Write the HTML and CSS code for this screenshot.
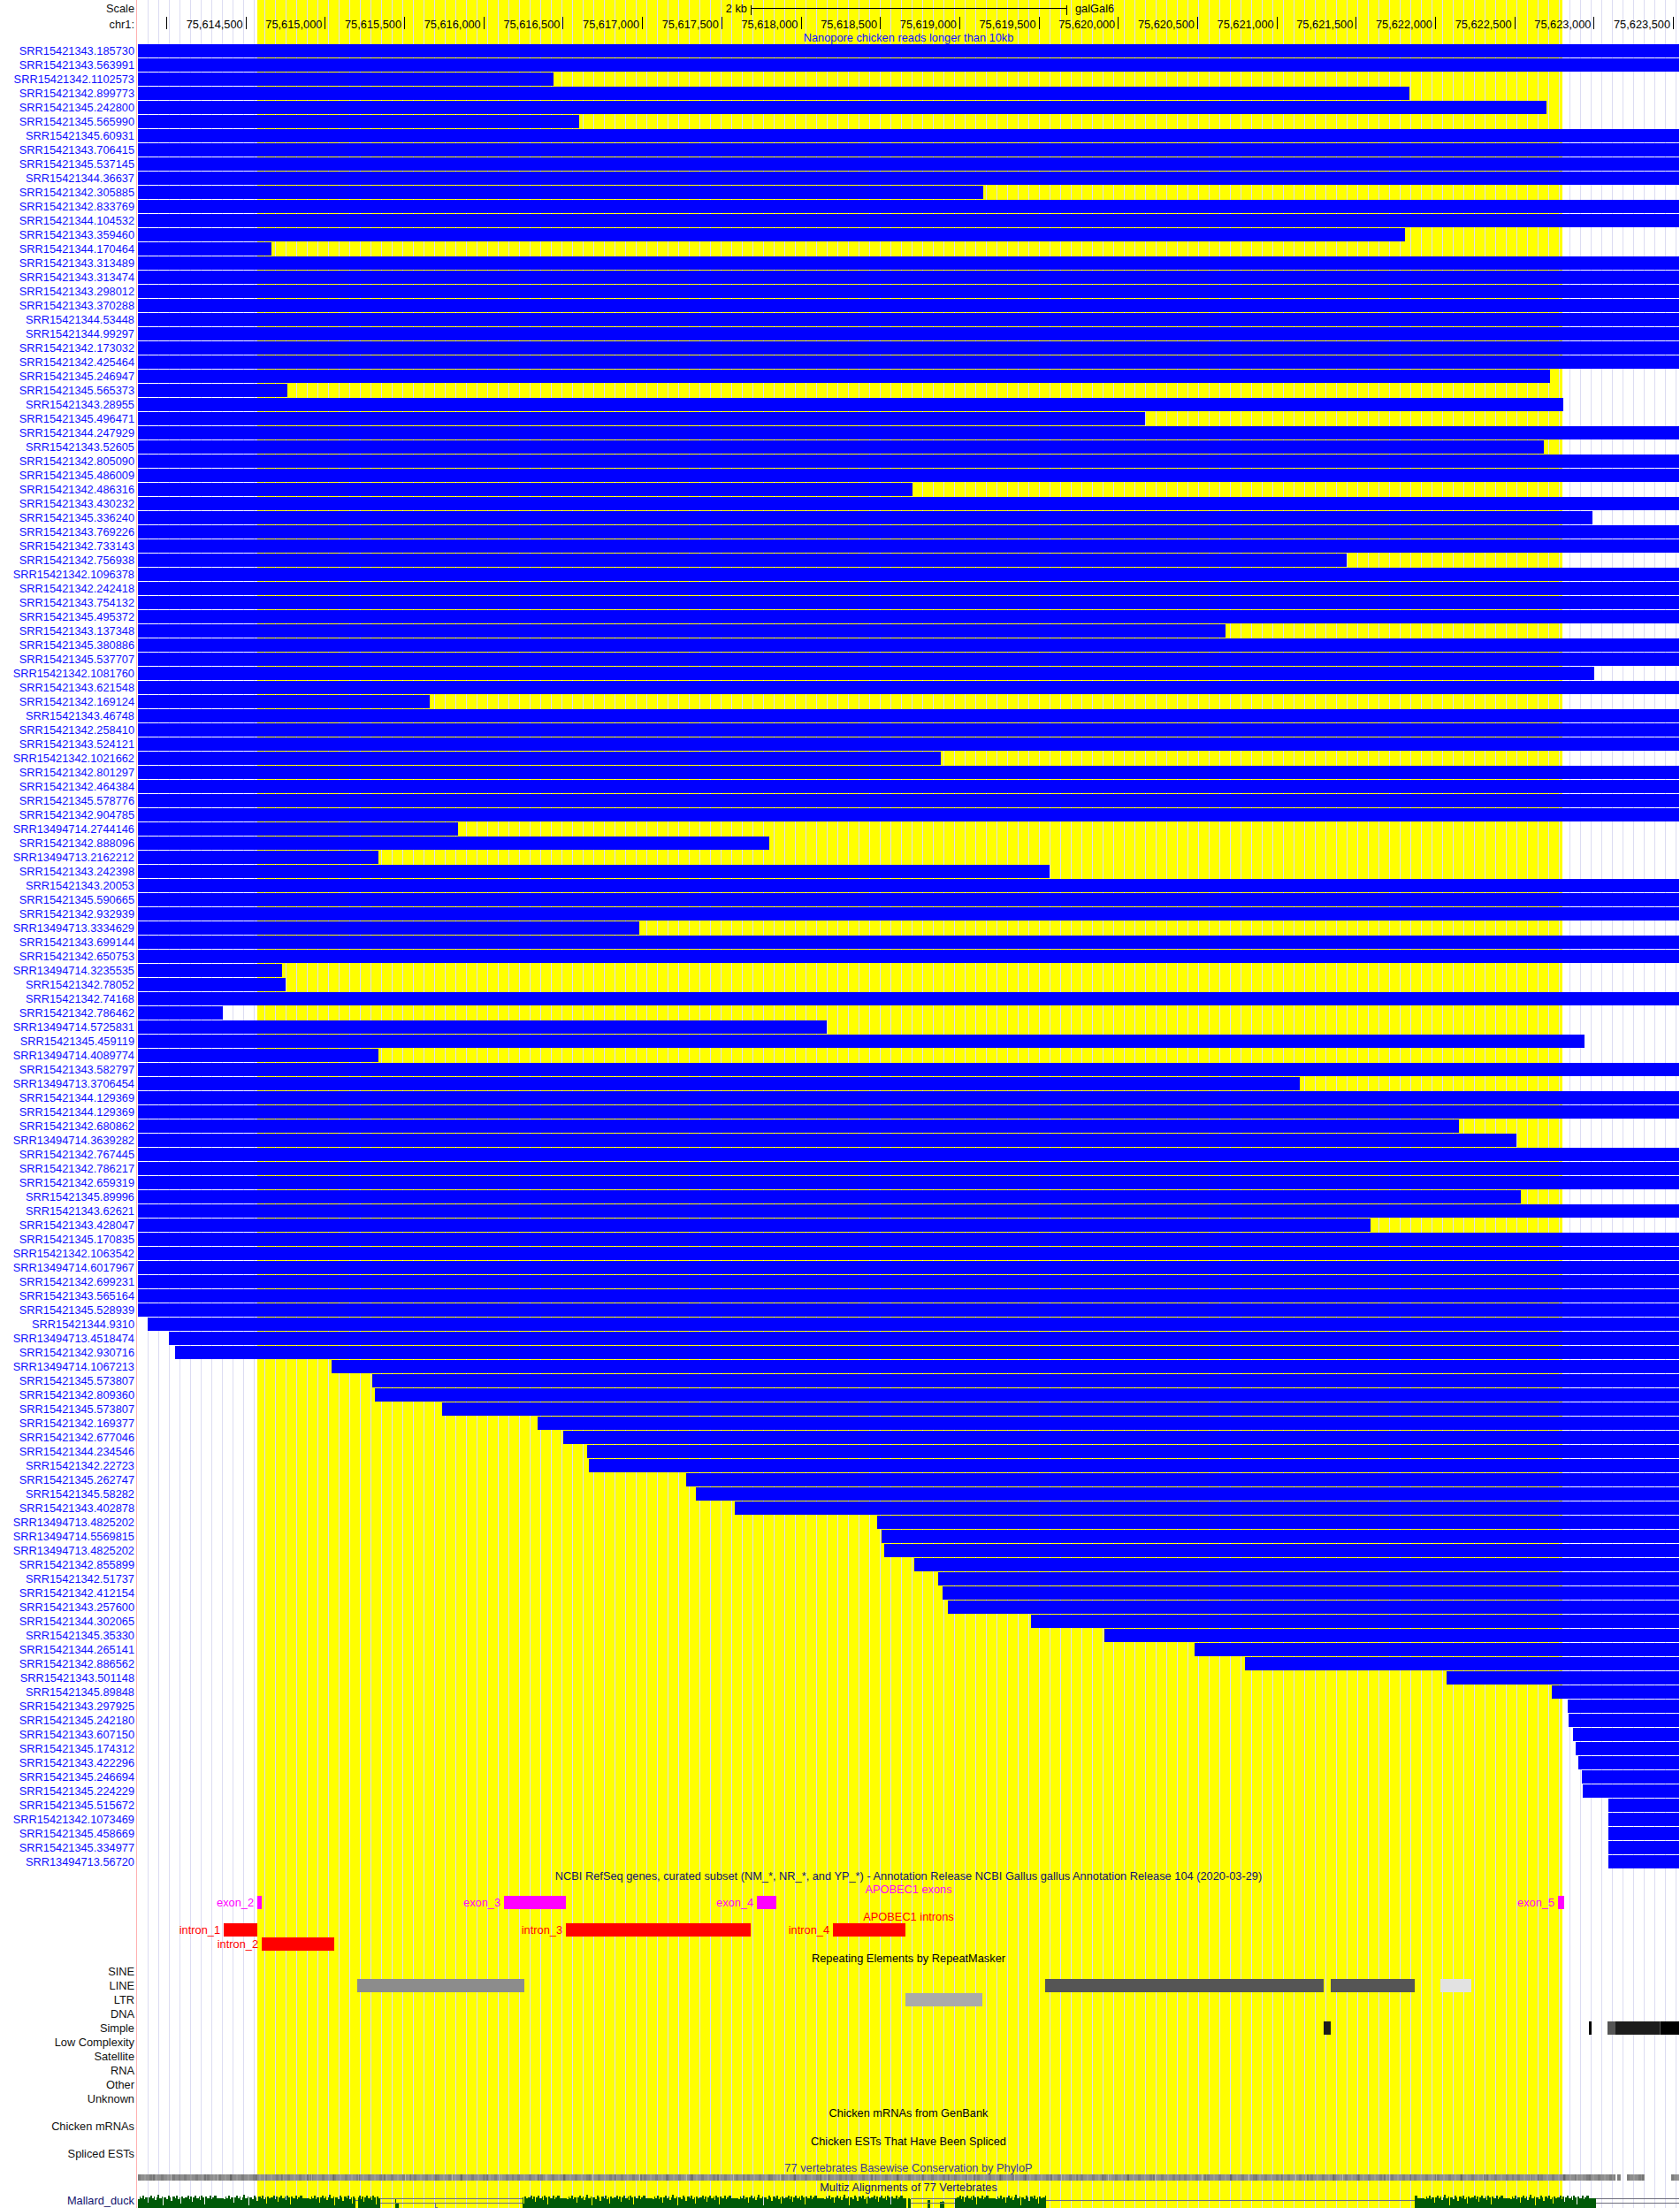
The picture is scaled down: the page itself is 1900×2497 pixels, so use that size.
FILE: index.html
```html
<!DOCTYPE html>
<html lang="en">
<head>
<meta charset="utf-8">
<title>Nanopore chicken reads longer than 10kb</title>
<link rel="stylesheet" href="styles.css">
</head>
<body>
<main class="browser">
<header>
<div class="row scale"><span class="lab">Scale</span><span class="kb">2 kb</span><span class="kbar"></span><span class="db">galGal6</span></div>
<div class="row ruler"><span class="lab">chr1:</span><span class="tick first"></span><span class="tick">75,614,500</span><span class="tick">75,615,000</span><span class="tick">75,615,500</span><span class="tick">75,616,000</span><span class="tick">75,616,500</span><span class="tick">75,617,000</span><span class="tick">75,617,500</span><span class="tick">75,618,000</span><span class="tick">75,618,500</span><span class="tick">75,619,000</span><span class="tick">75,619,500</span><span class="tick">75,620,000</span><span class="tick">75,620,500</span><span class="tick">75,621,000</span><span class="tick">75,621,500</span><span class="tick">75,622,000</span><span class="tick">75,622,500</span><span class="tick">75,623,000</span><span class="tick">75,623,500</span></div>
<div class="row t14"><span class="lab"></span><span class="ttl reads">Nanopore chicken reads longer than 10kb</span></div>
</header>
<section class="reads-list">
<div class="row"><span class="lab">SRR15421343.185730</span><i class="bar"></i></div>
<div class="row"><span class="lab">SRR15421343.563991</span><i class="bar"></i></div>
<div class="row"><span class="lab">SRR15421342.1102573</span><i class="bar cut" style="width:470px"></i></div>
<div class="row"><span class="lab">SRR15421342.899773</span><i class="bar cut" style="width:1438px"></i></div>
<div class="row"><span class="lab">SRR15421345.242800</span><i class="bar cut" style="width:1593px"></i></div>
<div class="row"><span class="lab">SRR15421345.565990</span><i class="bar cut" style="width:499px"></i></div>
<div class="row"><span class="lab">SRR15421345.60931</span><i class="bar"></i></div>
<div class="row"><span class="lab">SRR15421343.706415</span><i class="bar"></i></div>
<div class="row"><span class="lab">SRR15421345.537145</span><i class="bar"></i></div>
<div class="row"><span class="lab">SRR15421344.36637</span><i class="bar"></i></div>
<div class="row"><span class="lab">SRR15421342.305885</span><i class="bar cut" style="width:956px"></i></div>
<div class="row"><span class="lab">SRR15421342.833769</span><i class="bar"></i></div>
<div class="row"><span class="lab">SRR15421344.104532</span><i class="bar"></i></div>
<div class="row"><span class="lab">SRR15421343.359460</span><i class="bar cut" style="width:1433px"></i></div>
<div class="row"><span class="lab">SRR15421344.170464</span><i class="bar cut" style="width:151px"></i></div>
<div class="row"><span class="lab">SRR15421343.313489</span><i class="bar"></i></div>
<div class="row"><span class="lab">SRR15421343.313474</span><i class="bar"></i></div>
<div class="row"><span class="lab">SRR15421343.298012</span><i class="bar"></i></div>
<div class="row"><span class="lab">SRR15421343.370288</span><i class="bar"></i></div>
<div class="row"><span class="lab">SRR15421344.53448</span><i class="bar"></i></div>
<div class="row"><span class="lab">SRR15421344.99297</span><i class="bar"></i></div>
<div class="row"><span class="lab">SRR15421342.173032</span><i class="bar"></i></div>
<div class="row"><span class="lab">SRR15421342.425464</span><i class="bar"></i></div>
<div class="row"><span class="lab">SRR15421345.246947</span><i class="bar cut" style="width:1597px"></i></div>
<div class="row"><span class="lab">SRR15421345.565373</span><i class="bar cut" style="width:169px"></i></div>
<div class="row"><span class="lab">SRR15421343.28955</span><i class="bar cut" style="width:1612px"></i></div>
<div class="row"><span class="lab">SRR15421345.496471</span><i class="bar cut" style="width:1139px"></i></div>
<div class="row"><span class="lab">SRR15421344.247929</span><i class="bar"></i></div>
<div class="row"><span class="lab">SRR15421343.52605</span><i class="bar cut" style="width:1590px"></i></div>
<div class="row"><span class="lab">SRR15421342.805090</span><i class="bar"></i></div>
<div class="row"><span class="lab">SRR15421345.486009</span><i class="bar"></i></div>
<div class="row"><span class="lab">SRR15421342.486316</span><i class="bar cut" style="width:876px"></i></div>
<div class="row"><span class="lab">SRR15421343.430232</span><i class="bar"></i></div>
<div class="row"><span class="lab">SRR15421345.336240</span><i class="bar cut" style="width:1645px"></i></div>
<div class="row"><span class="lab">SRR15421343.769226</span><i class="bar"></i></div>
<div class="row"><span class="lab">SRR15421342.733143</span><i class="bar"></i></div>
<div class="row"><span class="lab">SRR15421342.756938</span><i class="bar cut" style="width:1367px"></i></div>
<div class="row"><span class="lab">SRR15421342.1096378</span><i class="bar"></i></div>
<div class="row"><span class="lab">SRR15421342.242418</span><i class="bar"></i></div>
<div class="row"><span class="lab">SRR15421343.754132</span><i class="bar"></i></div>
<div class="row"><span class="lab">SRR15421345.495372</span><i class="bar"></i></div>
<div class="row"><span class="lab">SRR15421343.137348</span><i class="bar cut" style="width:1230px"></i></div>
<div class="row"><span class="lab">SRR15421345.380886</span><i class="bar"></i></div>
<div class="row"><span class="lab">SRR15421345.537707</span><i class="bar"></i></div>
<div class="row"><span class="lab">SRR15421342.1081760</span><i class="bar cut" style="width:1647px"></i></div>
<div class="row"><span class="lab">SRR15421343.621548</span><i class="bar"></i></div>
<div class="row"><span class="lab">SRR15421342.169124</span><i class="bar cut" style="width:330px"></i></div>
<div class="row"><span class="lab">SRR15421343.46748</span><i class="bar"></i></div>
<div class="row"><span class="lab">SRR15421342.258410</span><i class="bar"></i></div>
<div class="row"><span class="lab">SRR15421343.524121</span><i class="bar"></i></div>
<div class="row"><span class="lab">SRR15421342.1021662</span><i class="bar cut" style="width:908px"></i></div>
<div class="row"><span class="lab">SRR15421342.801297</span><i class="bar"></i></div>
<div class="row"><span class="lab">SRR15421342.464384</span><i class="bar"></i></div>
<div class="row"><span class="lab">SRR15421345.578776</span><i class="bar"></i></div>
<div class="row"><span class="lab">SRR15421342.904785</span><i class="bar"></i></div>
<div class="row"><span class="lab">SRR13494714.2744146</span><i class="bar cut" style="width:362px"></i></div>
<div class="row"><span class="lab">SRR15421342.888096</span><i class="bar cut" style="width:714px"></i></div>
<div class="row"><span class="lab">SRR13494713.2162212</span><i class="bar cut" style="width:272px"></i></div>
<div class="row"><span class="lab">SRR15421343.242398</span><i class="bar cut" style="width:1031px"></i></div>
<div class="row"><span class="lab">SRR15421343.20053</span><i class="bar"></i></div>
<div class="row"><span class="lab">SRR15421345.590665</span><i class="bar"></i></div>
<div class="row"><span class="lab">SRR15421342.932939</span><i class="bar"></i></div>
<div class="row"><span class="lab">SRR13494713.3334629</span><i class="bar cut" style="width:567px"></i></div>
<div class="row"><span class="lab">SRR15421343.699144</span><i class="bar"></i></div>
<div class="row"><span class="lab">SRR15421342.650753</span><i class="bar"></i></div>
<div class="row"><span class="lab">SRR13494714.3235535</span><i class="bar cut" style="width:163px"></i></div>
<div class="row"><span class="lab">SRR15421342.78052</span><i class="bar cut" style="width:167px"></i></div>
<div class="row"><span class="lab">SRR15421342.74168</span><i class="bar"></i></div>
<div class="row"><span class="lab">SRR15421342.786462</span><i class="bar cut" style="width:96px"></i></div>
<div class="row"><span class="lab">SRR13494714.5725831</span><i class="bar cut" style="width:779px"></i></div>
<div class="row"><span class="lab">SRR15421345.459119</span><i class="bar cut" style="width:1636px"></i></div>
<div class="row"><span class="lab">SRR13494714.4089774</span><i class="bar cut" style="width:272px"></i></div>
<div class="row"><span class="lab">SRR15421343.582797</span><i class="bar"></i></div>
<div class="row"><span class="lab">SRR13494713.3706454</span><i class="bar cut" style="width:1314px"></i></div>
<div class="row"><span class="lab">SRR15421344.129369</span><i class="bar"></i></div>
<div class="row"><span class="lab">SRR15421344.129369</span><i class="bar"></i></div>
<div class="row"><span class="lab">SRR15421342.680862</span><i class="bar cut" style="width:1494px"></i></div>
<div class="row"><span class="lab">SRR13494714.3639282</span><i class="bar cut" style="width:1559px"></i></div>
<div class="row"><span class="lab">SRR15421342.767445</span><i class="bar"></i></div>
<div class="row"><span class="lab">SRR15421342.786217</span><i class="bar"></i></div>
<div class="row"><span class="lab">SRR15421342.659319</span><i class="bar"></i></div>
<div class="row"><span class="lab">SRR15421345.89996</span><i class="bar cut" style="width:1564px"></i></div>
<div class="row"><span class="lab">SRR15421343.62621</span><i class="bar"></i></div>
<div class="row"><span class="lab">SRR15421343.428047</span><i class="bar cut" style="width:1394px"></i></div>
<div class="row"><span class="lab">SRR15421345.170835</span><i class="bar"></i></div>
<div class="row"><span class="lab">SRR15421342.1063542</span><i class="bar"></i></div>
<div class="row"><span class="lab">SRR13494714.6017967</span><i class="bar"></i></div>
<div class="row"><span class="lab">SRR15421342.699231</span><i class="bar"></i></div>
<div class="row"><span class="lab">SRR15421343.565164</span><i class="bar"></i></div>
<div class="row"><span class="lab">SRR15421345.528939</span><i class="bar"></i></div>
<div class="row"><span class="lab">SRR15421344.9310</span><i class="bar" style="margin-left:11px"></i></div>
<div class="row"><span class="lab">SRR13494713.4518474</span><i class="bar" style="margin-left:35px"></i></div>
<div class="row"><span class="lab">SRR15421342.930716</span><i class="bar" style="margin-left:42px"></i></div>
<div class="row"><span class="lab">SRR13494714.1067213</span><i class="bar" style="margin-left:219px"></i></div>
<div class="row"><span class="lab">SRR15421345.573807</span><i class="bar" style="margin-left:265px"></i></div>
<div class="row"><span class="lab">SRR15421342.809360</span><i class="bar" style="margin-left:268px"></i></div>
<div class="row"><span class="lab">SRR15421345.573807</span><i class="bar" style="margin-left:344px"></i></div>
<div class="row"><span class="lab">SRR15421342.169377</span><i class="bar" style="margin-left:452px"></i></div>
<div class="row"><span class="lab">SRR15421342.677046</span><i class="bar" style="margin-left:481px"></i></div>
<div class="row"><span class="lab">SRR15421344.234546</span><i class="bar" style="margin-left:508px"></i></div>
<div class="row"><span class="lab">SRR15421342.22723</span><i class="bar" style="margin-left:510px"></i></div>
<div class="row"><span class="lab">SRR15421345.262747</span><i class="bar" style="margin-left:620px"></i></div>
<div class="row"><span class="lab">SRR15421345.58282</span><i class="bar" style="margin-left:631px"></i></div>
<div class="row"><span class="lab">SRR15421343.402878</span><i class="bar" style="margin-left:675px"></i></div>
<div class="row"><span class="lab">SRR13494713.4825202</span><i class="bar" style="margin-left:836px"></i></div>
<div class="row"><span class="lab">SRR13494714.5569815</span><i class="bar" style="margin-left:841px"></i></div>
<div class="row"><span class="lab">SRR13494713.4825202</span><i class="bar" style="margin-left:844px"></i></div>
<div class="row"><span class="lab">SRR15421342.855899</span><i class="bar" style="margin-left:878px"></i></div>
<div class="row"><span class="lab">SRR15421342.51737</span><i class="bar" style="margin-left:905px"></i></div>
<div class="row"><span class="lab">SRR15421342.412154</span><i class="bar" style="margin-left:910px"></i></div>
<div class="row"><span class="lab">SRR15421343.257600</span><i class="bar" style="margin-left:916px"></i></div>
<div class="row"><span class="lab">SRR15421344.302065</span><i class="bar" style="margin-left:1010px"></i></div>
<div class="row"><span class="lab">SRR15421345.35330</span><i class="bar" style="margin-left:1093px"></i></div>
<div class="row"><span class="lab">SRR15421344.265141</span><i class="bar" style="margin-left:1195px"></i></div>
<div class="row"><span class="lab">SRR15421342.886562</span><i class="bar" style="margin-left:1252px"></i></div>
<div class="row"><span class="lab">SRR15421343.501148</span><i class="bar" style="margin-left:1480px"></i></div>
<div class="row"><span class="lab">SRR15421345.89848</span><i class="bar" style="margin-left:1599px"></i></div>
<div class="row"><span class="lab">SRR15421343.297925</span><i class="bar" style="margin-left:1617px"></i></div>
<div class="row"><span class="lab">SRR15421345.242180</span><i class="bar" style="margin-left:1618px"></i></div>
<div class="row"><span class="lab">SRR15421343.607150</span><i class="bar" style="margin-left:1623px"></i></div>
<div class="row"><span class="lab">SRR15421345.174312</span><i class="bar" style="margin-left:1626px"></i></div>
<div class="row"><span class="lab">SRR15421343.422296</span><i class="bar" style="margin-left:1629px"></i></div>
<div class="row"><span class="lab">SRR15421345.246694</span><i class="bar" style="margin-left:1633px"></i></div>
<div class="row"><span class="lab">SRR15421345.224229</span><i class="bar" style="margin-left:1634px"></i></div>
<div class="row"><span class="lab">SRR15421345.515672</span><i class="bar" style="margin-left:1663px"></i></div>
<div class="row"><span class="lab">SRR15421342.1073469</span><i class="bar" style="margin-left:1663px"></i></div>
<div class="row"><span class="lab">SRR15421345.458669</span><i class="bar" style="margin-left:1663px"></i></div>
<div class="row"><span class="lab">SRR15421345.334977</span><i class="bar" style="margin-left:1663px"></i></div>
<div class="row"><span class="lab">SRR13494713.56720</span><i class="bar" style="margin-left:1663px"></i></div>
</section>
<section class="gene">
<div class="row"><span class="lab"></span><span class="ttl navy">NCBI RefSeq genes, curated subset (NM_*, NR_*, and YP_*) - Annotation Release NCBI Gallus gallus Annotation Release 104 (2020-03-29)</span></div>
<div class="row t14"><span class="lab"></span><span class="ttl exon">APOBEC1 exons</span></div>
<div class="row exon"><span class="lab"></span><i class="seg" style="margin-left:135px;width:5px"><span class="tag">exon_2</span></i><i class="seg" style="margin-left:274px;width:70px"><span class="tag">exon_3</span></i><i class="seg" style="margin-left:216px;width:22px"><span class="tag">exon_4</span></i><i class="seg" style="margin-left:884px;width:7px"><span class="tag">exon_5</span></i></div>
<div class="row t15"><span class="lab"></span><span class="ttl intron">APOBEC1 introns</span></div>
<div class="row intron"><span class="lab"></span><i class="seg" style="margin-left:97px;width:38px"><span class="tag">intron_1</span></i><i class="seg" style="margin-left:349px;width:209px"><span class="tag">intron_3</span></i><i class="seg" style="margin-left:93px;width:82px"><span class="tag">intron_4</span></i></div>
<div class="row intron"><span class="lab"></span><i class="seg" style="margin-left:140px;width:82px"><span class="tag">intron_2</span></i></div>
</section>
<section class="repeats">
<div class="row t15"><span class="lab"></span><span class="ttl">Repeating Elements by RepeatMasker</span></div>
<div class="row dark"><span class="lab">SINE</span></div>
<div class="row dark"><span class="lab">LINE</span><i class="seg g-mid" style="margin-left:248px;width:189px"></i><i class="seg g-dark" style="margin-left:589px;width:315px"></i><i class="seg g-dark" style="margin-left:8px;width:95px"></i><i class="seg g-pale" style="margin-left:29px;width:35px"></i></div>
<div class="row dark"><span class="lab">LTR</span><i class="seg g-light" style="margin-left:868px;width:87px"></i></div>
<div class="row dark"><span class="lab">DNA</span></div>
<div class="row dark"><span class="lab">Simple</span><i class="seg g-ink" style="margin-left:1341px;width:8px"></i><i class="seg g-black" style="margin-left:292px;width:3px"></i><i class="seg g-dark" style="margin-left:18px;width:9px"></i><i class="seg g-ink" style="width:50px"></i><i class="seg g-dark" style="width:1px"></i><i class="seg g-black" style="width:21px"></i></div>
<div class="row dark"><span class="lab">Low Complexity</span></div>
<div class="row dark"><span class="lab">Satellite</span></div>
<div class="row dark"><span class="lab">RNA</span></div>
<div class="row dark"><span class="lab">Other</span></div>
<div class="row dark"><span class="lab">Unknown</span></div>
</section>
<section class="alignments">
<div class="row"><span class="lab"></span><span class="ttl">Chicken mRNAs from GenBank</span></div>
<div class="row dark up"><span class="lab">Chicken mRNAs</span></div>
<div class="row t15"><span class="lab"></span><span class="ttl">Chicken ESTs That Have Been Spliced</span></div>
<div class="row t15 dark up"><span class="lab">Spliced ESTs</span></div>
<div class="row t15"><span class="lab"></span><span class="ttl slate">77 vertebrates Basewise Conservation by PhyloP</span></div>
<div class="row band"><span class="lab"></span><i class="phylo" style="width:1671px"></i><i class="phylo" style="margin-left:2px;width:4px"></i><i class="phylo" style="margin-left:7px;width:20px"></i><i class="phylo" style="margin-left:30px;width:9px"></i></div>
<div class="row"><span class="lab"></span><span class="ttl navy">Multiz Alignments of 77 Vertebrates</span></div>
<div class="row t15 navy-lab"><span class="lab">Mallard_duck</span>
<svg class="duck" width="1743" height="15" viewBox="0 0 1743 15" aria-hidden="true">
<defs>
<pattern id="hist" width="97" height="15" patternUnits="userSpaceOnUse">
<path d="M0 15V5h2V2h1V4h2V1h2V5h1V3h3V9h1V3h2V1h2V4h2V2h1V6h2V3h1V0h2V4h3V2h1V12h1V3h3V5h2V1h2V3h1V7h2V2h3V4h1V1h2V5h2V3h1V10h1V2h2V4h2V3h3V1h2V5h1V2h2V8h1V3h2V1h2V4h3V2h1V6h1V1h2V3h2V11h1V2h2V4h3V1h2V5h1V3h2V1h3V4H97V15Z"/>
</pattern>
</defs>
<g class="hist">
<rect x="0" y="0" width="246" height="15"/>
<rect x="249" y="0" width="25" height="15"/>
<rect x="291" y="9" width="4" height="6"/>
<rect x="291" y="1" width="1" height="8"/>
<rect x="435" y="0" width="434" height="15"/>
<rect x="871" y="0" width="3" height="15"/>
<rect x="893" y="6" width="3" height="9"/>
<rect x="907" y="8" width="5" height="7"/>
<rect x="910" y="2" width="1" height="7"/>
<rect x="924" y="0" width="103" height="15"/>
<rect x="1444" y="0" width="205" height="15"/>
</g>
<g class="aln">
<path d="M246 6.5h3M274 4.5h161M274 9.5h161M874 4.5h50M874 9.5h50M1027 6.5h417M1649 4.5h94M1649 9.5h94M336.5 9v5M336 14.5h3"/>
</g>
</svg>
</div>
</section>
</main>
</body>
</html>
```

FILE: styles.css
```css
html, body {
  margin: 0;
  padding: 0;
  background: #fff;
}

.browser {
  width: 1899px;
  height: 2497px;
  overflow: hidden;
  font: 12.8px/15px "Liberation Sans", Arial, sans-serif;
  color: #000;
  background-color: #fff;
  background-image:
    linear-gradient(90deg, #dcdcf2 1px, transparent 1px),
    linear-gradient(#ffff00, #ffff00);
  background-size: 12px 100%, 1476px 100%;
  background-position: 155px 0, 291px 0;
  background-repeat: repeat-x, no-repeat;
}

.row {
  display: flex;
  height: 16px;
}

.t14 { height: 14px; line-height: 14px; }
.t15 { height: 15px; }

.lab {
  flex: none;
  box-sizing: border-box;
  width: 156px;
  height: 100%;
  padding-right: 4px;
  text-align: right;
  white-space: nowrap;
  color: #1010ff;
  background: linear-gradient(#ffb0b0, #ffb0b0) 154px 0 / 1px 100% no-repeat, #fff;
}

.dark .lab,
.scale .lab,
.ruler .lab { color: #111; }

.up .lab { line-height: 13px; }

.navy-lab .lab { color: #14146e; line-height: 14px; }

.bar {
  flex: 1;
  height: 15px;
  background: #0000ff;
}

.bar.cut { flex: none; }

/* header */
.scale {
  height: 19px;
  line-height: 20px;
}

.kb {
  width: 689px;
  text-align: right;
}

.kbar {
  box-sizing: border-box;
  width: 358px;
  height: 11px;
  margin: 6px 0 0 4px;
  border: solid #000;
  border-width: 0 1px;
  background: linear-gradient(#000, #000) 0 3px / 100% 1px no-repeat;
}

.db { margin-left: 9px; }

.ruler {
  height: 17px;
  line-height: 18px;
}

.tick {
  flex: none;
  box-sizing: border-box;
  width: 89.7px;
  height: 14px;
  padding-right: 3px;
  text-align: right;
  white-space: nowrap;
  border-right: 1px solid #000;
}

.tick.first { width: 33px; }

.ttl {
  flex: 1;
  text-align: center;
  white-space: nowrap;
  color: #000;
}

.reads { color: #1010ff; }
.navy { color: #12126a; }
.slate { color: #3c3c8c; }

/* gene blocks */
.seg {
  position: relative;
  flex: none;
  height: 15px;
}

.tag {
  position: absolute;
  right: 100%;
  top: 0;
  margin-right: 4px;
  font-style: normal;
  white-space: nowrap;
}

.exon.ttl { color: #ff00ff; }
.exon .seg { background: #ff00ff; }
.exon .tag { color: #ff00ff; }

.intron.ttl { color: #ff0000; }
.intron .seg { background: #ff0000; }
.intron .tag { color: #ff0000; }

/* repeats */
.g-mid { background: #8c8c8c; }
.g-light { background: #aaaaaa; }
.g-dark { background: #555555; }
.g-pale { background: #e2e2e2; }
.g-ink { background: #1c1c1c; }
.g-black { background: #000000; }

/* conservation band */
.band { height: 7px; }

.phylo {
  flex: none;
  height: 7px;
  background:
    repeating-linear-gradient(90deg, transparent 0 37px, rgba(255, 255, 255, .35) 37px 38px, transparent 38px 53px),
    repeating-linear-gradient(90deg, transparent 0 17px, rgba(0, 0, 0, .18) 17px 19px, transparent 19px 29px),
    repeating-linear-gradient(90deg, rgba(0, 0, 0, .12) 0 3px, transparent 3px 7px, rgba(255, 255, 255, .1) 7px 9px, transparent 9px 13px),
    #8e8e8e;
}

/* multiz */
.duck { display: block; flex: none; }
.hist { fill: url(#hist); }
#hist path { fill: #005a08; }
.aln path { fill: none; stroke: #6e6e7c; stroke-width: 1; }
```
